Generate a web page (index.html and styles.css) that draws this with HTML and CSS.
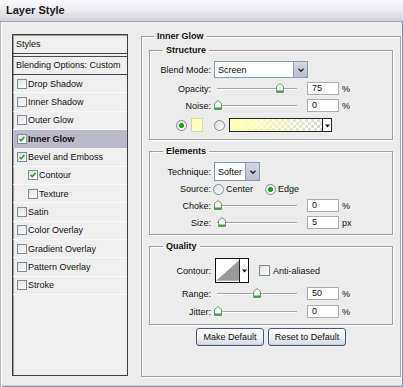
FILE: index.html
```html
<!DOCTYPE html>
<html lang="en">
<head>
    <meta charset="UTF-8">
    <title>Layer Style</title>
    <link rel="stylesheet" href="styles.css">
</head>
<body>
<div class="window">
    <div class="titlebar">Layer Style</div>
    <div class="dialog">

        <div class="styles-list">
            <div class="list-head">Styles</div>
            <div class="list-blend">Blending Options: Custom</div>
            <div class="item"><span class="check"></span>Drop Shadow</div>
            <div class="item"><span class="check"></span>Inner Shadow</div>
            <div class="item"><span class="check"></span>Outer Glow</div>
            <div class="item selected"><span class="check"><svg viewBox="0 0 10 10"><path d="M2 5 L4 7.2 L8 2.5"/></svg></span>Inner Glow</div>
            <div class="item"><span class="check"><svg viewBox="0 0 10 10"><path d="M2 5 L4 7.2 L8 2.5"/></svg></span>Bevel and Emboss</div>
            <div class="item sub"><span class="check"><svg viewBox="0 0 10 10"><path d="M2 5 L4 7.2 L8 2.5"/></svg></span>Contour</div>
            <div class="item sub"><span class="check"></span>Texture</div>
            <div class="item"><span class="check"></span>Satin</div>
            <div class="item"><span class="check"></span>Color Overlay</div>
            <div class="item"><span class="check"></span>Gradient Overlay</div>
            <div class="item"><span class="check"></span>Pattern Overlay</div>
            <div class="item"><span class="check"></span>Stroke</div>
        </div>

        <fieldset class="panel">
            <legend>Inner Glow</legend>

            <fieldset class="group structure">
                <legend>Structure</legend>
                <div class="row blend-row">
                    <span class="label">Blend Mode:</span>
                    <div class="select wide">
                        <span class="value">Screen</span>
                        <span class="drop"><svg viewBox="0 0 12 12"><path d="M3 4.5 L6 7.5 L9 4.5"/></svg></span>
                    </div>
                </div>
                <div class="row slider-row opacity-row">
                    <span class="label">Opacity:</span>
                    <div class="slider"><div class="track"><svg class="thumb" style="left: 79%" viewBox="0 0 8 10"><path d="M0.5 3.5 L4 0.5 L7.5 3.5 V9.5 H0.5 Z"/><rect x="1" y="7.5" width="6" height="1.6"/></svg></div></div>
                    <div class="num">75</div><span class="unit">%</span>
                </div>
                <div class="row slider-row">
                    <span class="label">Noise:</span>
                    <div class="slider"><div class="track"><svg class="thumb" style="left: 1%" viewBox="0 0 8 10"><path d="M0.5 3.5 L4 0.5 L7.5 3.5 V9.5 H0.5 Z"/><rect x="1" y="7.5" width="6" height="1.6"/></svg></div></div>
                    <div class="num">0</div><span class="unit">%</span>
                </div>
                <div class="row color-row">
                    <span class="radio on"></span>
                    <span class="swatch"></span>
                    <span class="radio second"></span>
                    <div class="gradient">
                        <span class="fill"></span>
                        <span class="gdrop"><svg viewBox="0 0 7 7"><path d="M1 2.5 H6 L3.5 5.5 Z"/></svg></span>
                    </div>
                </div>
            </fieldset>

            <fieldset class="group elements">
                <legend>Elements</legend>
                <div class="row technique-row">
                    <span class="label">Technique:</span>
                    <div class="select narrow">
                        <span class="value">Softer</span>
                        <span class="drop"><svg viewBox="0 0 12 12"><path d="M3 4.5 L6 7.5 L9 4.5"/></svg></span>
                    </div>
                </div>
                <div class="row source-row">
                    <span class="label">Source:</span>
                    <span class="radio"></span><span class="radio-text">Center</span>
                    <span class="radio on edge"></span><span class="radio-text">Edge</span>
                </div>
                <div class="row slider-row choke-row">
                    <span class="label">Choke:</span>
                    <div class="slider"><div class="track"><svg class="thumb" style="left: 1%" viewBox="0 0 8 10"><path d="M0.5 3.5 L4 0.5 L7.5 3.5 V9.5 H0.5 Z"/><rect x="1" y="7.5" width="6" height="1.6"/></svg></div></div>
                    <div class="num">0</div><span class="unit">%</span>
                </div>
                <div class="row slider-row size-row">
                    <span class="label">Size:</span>
                    <div class="slider"><div class="track"><svg class="thumb" style="left: 6%" viewBox="0 0 8 10"><path d="M0.5 3.5 L4 0.5 L7.5 3.5 V9.5 H0.5 Z"/><rect x="1" y="7.5" width="6" height="1.6"/></svg></div></div>
                    <div class="num">5</div><span class="unit">px</span>
                </div>
            </fieldset>

            <fieldset class="group quality">
                <legend>Quality</legend>
                <div class="row contour-row">
                    <span class="label">Contour:</span>
                    <div class="contour">
                        <svg class="curve" viewBox="0 0 25 22"><rect width="25" height="22" fill="#fff"/><polygon points="0,22 25,0 25,22" fill="#9a9a9a"/></svg>
                        <span class="cdrop"><svg viewBox="0 0 7 7"><path d="M1 2.5 H6 L3.5 5.5 Z"/></svg></span>
                    </div>
                    <span class="check anti"></span><span class="anti-text">Anti-aliased</span>
                </div>
                <div class="row slider-row range-row">
                    <span class="label">Range:</span>
                    <div class="slider"><div class="track"><svg class="thumb" style="left: 50%" viewBox="0 0 8 10"><path d="M0.5 3.5 L4 0.5 L7.5 3.5 V9.5 H0.5 Z"/><rect x="1" y="7.5" width="6" height="1.6"/></svg></div></div>
                    <div class="num">50</div><span class="unit">%</span>
                </div>
                <div class="row slider-row jitter-row">
                    <span class="label">Jitter:</span>
                    <div class="slider"><div class="track"><svg class="thumb" style="left: 1%" viewBox="0 0 8 10"><path d="M0.5 3.5 L4 0.5 L7.5 3.5 V9.5 H0.5 Z"/><rect x="1" y="7.5" width="6" height="1.6"/></svg></div></div>
                    <div class="num">0</div><span class="unit">%</span>
                </div>
            </fieldset>

            <div class="buttons">
                <button class="btn make">Make Default</button>
                <button class="btn reset">Reset to Default</button>
            </div>
        </fieldset>

    </div>
</div>
</body>
</html>
```

FILE: styles.css
```css
body {
    margin: 0;
    padding: 0;
    background: #fff;
    font-family: 'Liberation Sans', Arial, sans-serif;
    font-size: 9px;
    color: #111;
}
.window {
    width: 403px;
    height: 387px;
    box-sizing: border-box;
    background: #ececec;
    box-shadow: inset 1px 0 #b4b4c0, inset 2px 0 #f8f8f8, inset -1px 0 #8c8c9c, inset 0 -1px #8c8c9c, inset 0 -2px #d0d0d8;
    display: flex;
    flex-direction: column;
}
.titlebar {
    height: 22px;
    box-sizing: border-box;
    padding-left: 6px;
    line-height: 21px;
    font-size: 11px;
    font-weight: bold;
    color: #1a1a1a;
    background: linear-gradient(#fbfbfd, #ececf2 45%, #d2d2de);
    border-bottom: 1px solid #a4a4b4;
}
.dialog {
    display: flex;
    align-items: flex-start;
    gap: 13px;
    padding: 8px 0 0 12px;
}

/* left list */
.styles-list {
    width: 116px;
    height: 342px;
    box-sizing: border-box;
    margin-top: 4px;
    border: 1px solid #3e3e3e;
    box-shadow: inset 1px 1px #9a9a9a;
    background: #efefef;
}
.list-head {
    height: 18px;
    line-height: 18px;
    padding-left: 3px;
    border-bottom: 1px solid #4a4a4a;
}
.list-blend {
    height: 17px;
    line-height: 17px;
    margin-top: 2px;
    padding-left: 3px;
    border-top: 1px solid #4a4a4a;
    border-bottom: 1px solid #4a4a4a;
}
.item {
    height: 17.33px;
    display: flex;
    align-items: center;
    padding-left: 4px;
    border-bottom: 1px solid #fafafa;
}
.item.sub {
    padding-left: 15px;
}
.item.selected {
    background: #babaca;
    font-weight: bold;
    border-bottom-color: #babaca;
}
.check {
    width: 10px;
    height: 10px;
    box-sizing: border-box;
    flex: none;
    margin-right: 1px;
    border: 1px solid #7c8ea8;
    background: linear-gradient(135deg, #e2e2dc, #fdfdfd);
    display: flex;
}
.check svg {
    width: 8px;
    height: 8px;
    fill: none;
    stroke: #1f9a1f;
    stroke-width: 1.8;
}

/* right panel */
fieldset {
    margin: 0;
    min-width: 0;
    border: 1px solid #a2a2a2;
    box-shadow: 1px 1px #fbfbfb, inset 1px 1px #fbfbfb;
}
legend {
    font-weight: bold;
    line-height: 12px;
    padding: 0 3px;
    color: #111;
}
.panel {
    width: 260px;
    height: 347px;
    box-sizing: border-box;
    padding: 2px 7px 0;
}
.panel > legend {
    margin-left: 5px;
}
.group {
    padding: 0 0 7px;
    margin-top: 5px;
}
.group.structure {
    margin-top: 0;
}
.group > legend {
    margin-left: 13px;
}
.row {
    display: flex;
    align-items: center;
}
.label {
    width: 61px;
    flex: none;
    text-align: right;
    margin-right: 3px;
}

.select {
    display: flex;
    box-sizing: border-box;
    border: 1px solid #7f9db9;
    background: #fff;
}
.select .value {
    flex: 1;
    padding-left: 3px;
    display: flex;
    align-items: center;
}
.select .drop {
    width: 13px;
    display: flex;
    align-items: center;
    justify-content: center;
    background: linear-gradient(#d8d8e4, #bcbccc);
    border-left: 1px solid #9c9cb4;
}
.select .drop svg {
    width: 10px;
    height: 10px;
    fill: none;
    stroke: #2a2a3a;
    stroke-width: 1.8;
}
.select.wide {
    width: 94px;
    height: 17px;
}
.select.narrow {
    width: 46px;
    height: 19px;
}

.slider-row {
    height: 13px;
    margin-top: 4px;
}
.slider {
    width: 86px;
    height: 13px;
    flex: none;
}
.track {
    position: relative;
    margin: 6px 3px 0;
    height: 0;
    border-top: 1px solid #a6a6a6;
    border-bottom: 1px solid #fff;
}
.thumb {
    position: absolute;
    top: -6px;
    width: 8px;
    height: 10px;
    margin-left: -4px;
    fill: #f4f4f4;
    stroke: #5f8f5f;
    stroke-width: 0.9;
}
.thumb rect {
    fill: #3aa23a;
    stroke: none;
}
.num {
    width: 32px;
    height: 13px;
    box-sizing: border-box;
    flex: none;
    margin-left: 7px;
    padding-left: 4px;
    line-height: 11px;
    background: #fff;
    border: 1px solid #a9b0ba;
}
.unit {
    margin-left: 3px;
}

.blend-row {
    margin-top: 5px;
}
.opacity-row {
    margin-top: 4px;
}
.color-row {
    height: 14px;
    margin-top: 6px;
    padding-left: 26px;
}
.radio {
    width: 11px;
    height: 11px;
    box-sizing: border-box;
    flex: none;
    border-radius: 50%;
    border: 1px solid #7b8fa8;
    background: linear-gradient(135deg, #dcdcd6, #ffffff);
}
.radio.on {
    background: radial-gradient(circle, #23a023 0 2.2px, transparent 2.8px), linear-gradient(135deg, #dcdcd6, #ffffff);
}
.swatch {
    width: 12px;
    height: 14px;
    box-sizing: border-box;
    margin-left: 4px;
    background: #ffffbd;
    border: 1px solid #d8d8b0;
}
.radio.second {
    margin-left: 11px;
}
.gradient {
    width: 103px;
    height: 14px;
    box-sizing: border-box;
    margin-left: 4px;
    display: flex;
    border: 1px solid #222;
    background-color: #fff;
    background-image: linear-gradient(45deg, #dcdcdc 25%, transparent 25%, transparent 75%, #dcdcdc 75%), linear-gradient(45deg, #dcdcdc 25%, transparent 25%, transparent 75%, #dcdcdc 75%);
    background-size: 6px 6px;
    background-position: 0 0, 3px 3px;
}
.gradient .fill {
    flex: 1;
    background: linear-gradient(to right, #ffffbd 10%, rgba(255, 255, 189, 0));
}
.gdrop, .cdrop {
    width: 8px;
    display: flex;
    align-items: center;
    justify-content: center;
    background: #fff;
    border-left: 1px solid #222;
}
.gdrop svg, .cdrop svg {
    width: 7px;
    height: 7px;
    fill: #111;
}

.technique-row {
    margin-top: 5px;
}
.source-row {
    height: 12px;
    margin-top: 2px;
}
.source-row .radio {
    margin-left: -1px;
}
.source-row .radio.edge {
    margin-left: 12px;
}
.radio-text {
    margin-left: 2px;
}
.choke-row {
    margin-top: 4px;
}
.size-row {
    margin-top: 4px;
}
.group.elements {
    padding-bottom: 5px;
}

.contour-row {
    margin-top: 6px;
}
.contour {
    width: 34px;
    height: 25px;
    box-sizing: border-box;
    margin-left: 1px;
    display: flex;
    border: 1px solid #111;
    background: #fff;
}
.contour .curve {
    width: 25px;
    height: 23px;
}
.check.anti {
    margin-left: 10px;
    margin-right: 0;
    width: 11px;
    height: 11px;
}
.anti-text {
    margin-left: 3px;
}
.range-row {
    margin-top: 4px;
}
.jitter-row {
    margin-top: 5px;
}
.group.quality {
    padding-bottom: 6px;
}

.buttons {
    display: flex;
    justify-content: center;
    gap: 4px;
    margin-top: 3px;
}
.btn {
    height: 18px;
    padding: 0;
    font-family: 'Liberation Sans', Arial, sans-serif;
    font-size: 9px;
    color: #111;
    border: 1px solid #42587a;
    border-radius: 3px;
    background: linear-gradient(#ffffff, #f0f0f4 55%, #d6dae6);
    box-shadow: inset 0 -1px #c4cad8;
}
.btn.make {
    width: 68px;
}
.btn.reset {
    width: 78px;
}
```
